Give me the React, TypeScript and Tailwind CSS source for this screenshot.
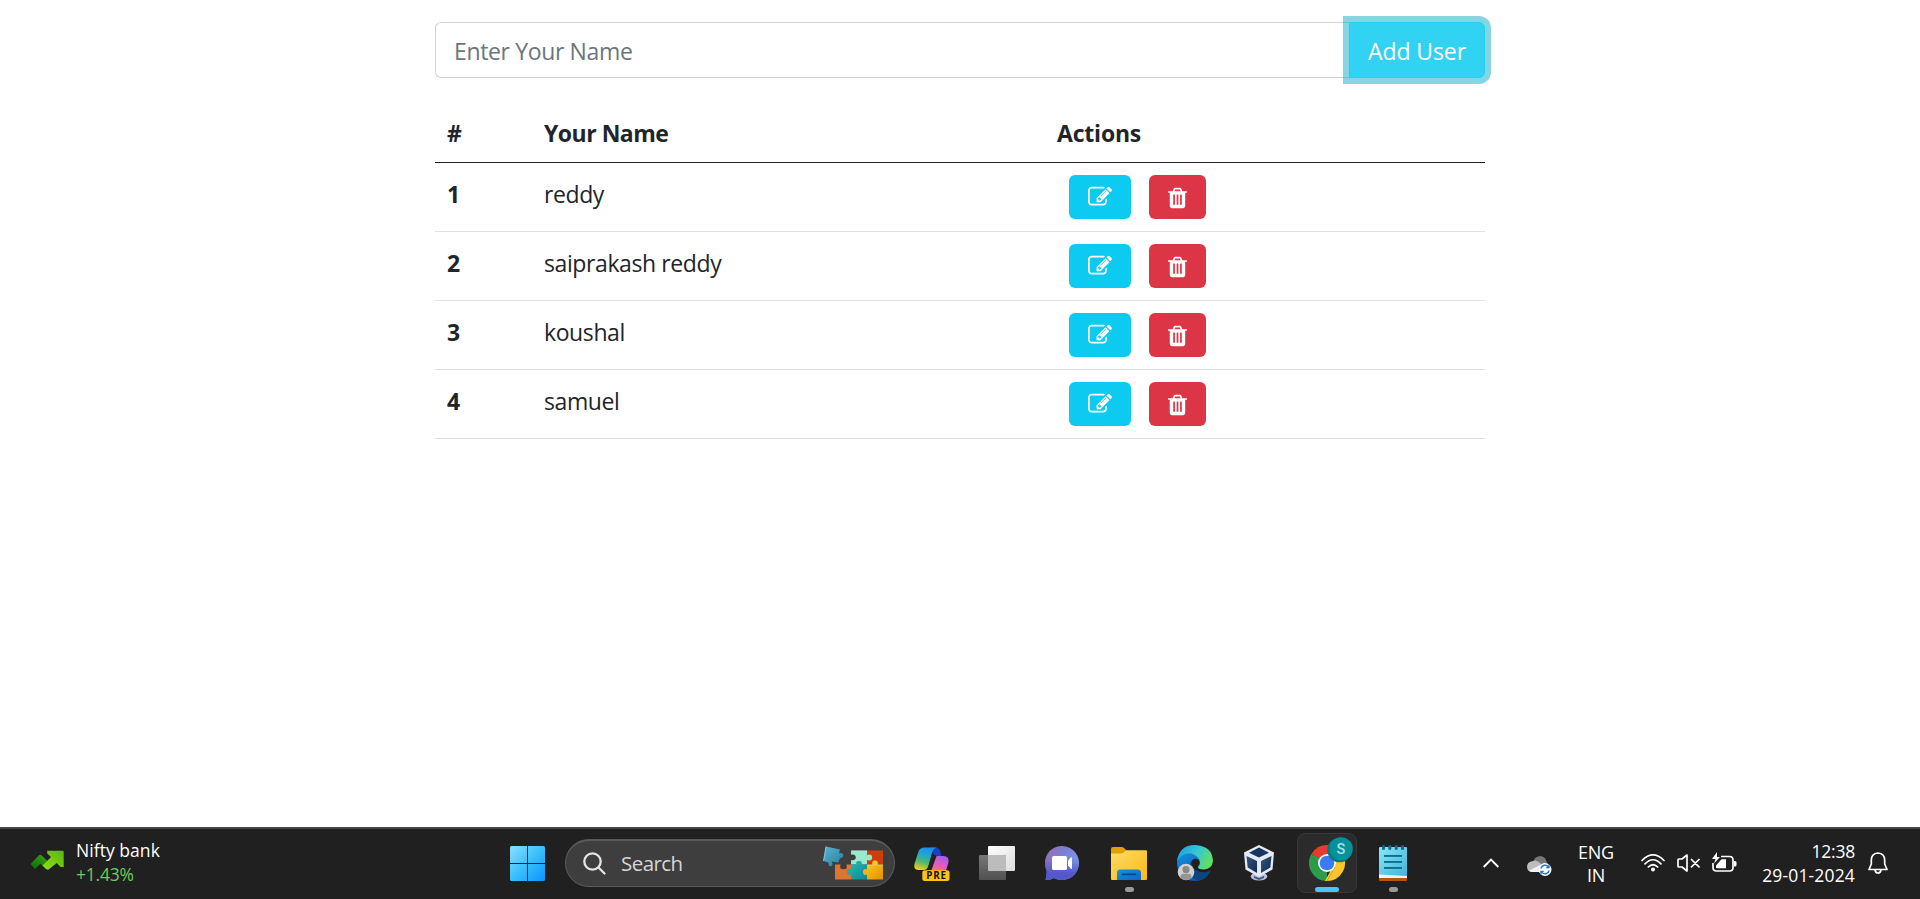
import React from "react";

const users = ["reddy", "saiprakash reddy", "koushal", "samuel"];

function EditIcon() {
  return (
    <svg viewBox="0 0 1792 1792" className="h-6 w-6 fill-white">
      <path d="M888 1184l116-116-152-152-116 116v56h96v96h56zm440-720q-16-16-33 1l-350 350q-17 17-1 33t33-1l350-350q17-17 1-33zm80 594v190q0 119-84.5 203.5t-203.5 84.5h-832q-119 0-203.5-84.5t-84.5-203.5v-832q0-119 84.5-203.5t203.5-84.5h832q63 0 117 25 15 7 18 23 3 17-9 29l-49 49q-14 14-32 8-23-6-45-6h-832q-66 0-113 47t-47 113v832q0 66 47 113t113 47h832q66 0 113-47t47-113v-126q0-13 9-22l64-64q15-15 35-7t20 29zm-96-738l288 288-672 672h-288v-288zm444 132l-92 92-288-288 92-92q28-28 68-28t68 28l152 152q28 28 28 68t-28 68z" />
    </svg>
  );
}

function TrashIcon() {
  return (
    <svg viewBox="192 0 1408 1792" className="mt-px h-6 w-[19px] fill-white">
      <path d="M704 1376v-704q0-14-9-23t-23-9h-64q-14 0-23 9t-9 23v704q0 14 9 23t23 9h64q14 0 23-9t9-23zm256 0v-704q0-14-9-23t-23-9h-64q-14 0-23 9t-9 23v704q0 14 9 23t23 9h64q14 0 23-9t9-23zm256 0v-704q0-14-9-23t-23-9h-64q-14 0-23 9t-9 23v704q0 14 9 23t23 9h64q14 0 23-9t9-23zm-544-992h448l-48-117q-7-9-17-11h-317q-10 2-17 11zm928 32v64q0 14-9 23t-23 9h-96v948q0 83-47 143.5t-113 60.5h-832q-66 0-113-58.5t-47-141.5v-952h-96q-14 0-23-9t-9-23v-64q0-14 9-23t23-9h309l70-167q15-37 54-63t79-26h320q40 0 79 26t54 63l70 167h309q14 0 23 9t9 23z" />
    </svg>
  );
}

function StocksIcon() {
  return (
    <svg viewBox="0 0 34 20" className="h-5 w-[34px]">
      <defs>
        <linearGradient id="st1" x1="0" x2="1" y1="1" y2="0">
          <stop offset="0" stopColor="#0b6a0b" />
          <stop offset="1" stopColor="#3fa912" />
        </linearGradient>
        <linearGradient id="st2" x1="0" x2="1" y1="1" y2="0">
          <stop offset="0" stopColor="#93dc1a" />
          <stop offset="1" stopColor="#57b80b" />
        </linearGradient>
      </defs>
      <path d="M0.5 14 9 5.300 Q10.300 4.300 11.600 5.300L21 14.500 16 19.300 10.300 13.800 5 19Z" fill="url(#st1)" />
      <path d="M12.500 15.500 21 7 17.200 3.500V.7H32.500Q33.700.7 33.700 2V17H30.500L26.800 13 18.600 19.600Q17.600 20 16.500 19.300Z" fill="url(#st2)" />
    </svg>
  );
}

function StartIcon() {
  return (
    <svg viewBox="0 0 35 35" className="h-[35px] w-[35px]">
      <defs>
        <linearGradient id="win" gradientUnits="userSpaceOnUse" x1="0" y1="0" x2="35" y2="35">
          <stop offset="0" stopColor="#8be0ff" />
          <stop offset=".45" stopColor="#3fc4fb" />
          <stop offset="1" stopColor="#0a93ff" />
        </linearGradient>
      </defs>
      <g fill="url(#win)">
        <path d="M1.500 0H17V17H0V1.500Q0 0 1.500 0Z" />
        <path d="M18 0H33.500Q35 0 35 1.500V17H18Z" />
        <path d="M0 18H17V35H1.500Q0 35 0 33.500Z" />
        <path d="M18 18H35V33.500Q35 35 33.500 35H18Z" />
      </g>
    </svg>
  );
}

function PuzzleIcon() {
  return (
    <svg viewBox="0 0 62 36" className="h-9 w-[62px]">
      <defs>
        <linearGradient id="pz1" x1="0" y1="0" x2="1" y2="1">
          <stop offset="0" stopColor="#58b4cb" />
          <stop offset="1" stopColor="#2a7da3" />
        </linearGradient>
        <linearGradient id="pz2" x1="0" y1="0" x2="1" y2="1">
          <stop offset="0" stopColor="#fbc51d" />
          <stop offset="1" stopColor="#e58e00" />
        </linearGradient>
        <linearGradient id="pz3" x1="0" y1="0" x2="1" y2="1">
          <stop offset="0" stopColor="#20b3b0" />
          <stop offset="1" stopColor="#11868f" />
        </linearGradient>
      </defs>
      <path d="M13 19.500h16V34.500H13z" fill="#dc7530" />
      <path d="M18.500 19H24.500V20.500Q26 24 21.500 24.200 17 24 18.500 20.500Z" fill="#3c3c3c" />
      <path d="M29 5.500h16v14H29z" fill="#97e8cc" />
      <path d="M28.500 9.800Q33.500 8.500 33.800 12.500 33.500 16 28.500 15Z" fill="#3d3d3d" />
      <path d="M45 5.500h16v14H45z" fill="#ce3e0d" />
      <path d="M29 19.500h16v15H29z" fill="url(#pz3)" />
      <path d="M45 19.500h16v15H45z" fill="url(#pz2)" />
      <path d="M45 10Q50 8.500 50.200 12.500 50 16.500 45 15Z" fill="#97e8cc" />
      <path d="M34.500 20Q33 16 37 16 41 16 39.500 20Z" fill="#20aaa9" />
      <path d="M50.500 20Q49 15.500 53 15.500 57 15.500 55.500 20Z" fill="#fbc51d" />
      <path d="M29.500 24.500Q25 23 25 27 25 31 29.500 29.500Z" fill="#20aaa9" />
      <path d="M45.500 24.500Q41 23 41 27 41 31 45.500 29.500Z" fill="#f4b316" />
      <path d="M4 1.500 18 4.500 17 8.500C21.500 6.500 23.600 13 17.800 13.500L16.500 17.500 9.500 16.500C13 21.500 6 23.800 6.500 17.500L1.500 16Z" fill="url(#pz1)" />
      <path d="M4 1.500 1.500 16" stroke="#9edbe8" strokeWidth=".8" />
      <path d="M29.500 6H45M45.500 20H60.500" stroke="#fff" strokeOpacity=".35" strokeWidth=".8" />
    </svg>
  );
}

function CopilotIcon() {
  return (
    <svg viewBox="0 0 36 36" className="h-9 w-9">
      <defs>
        <linearGradient id="cp1" x1=".6" x2=".3" y1="0" y2="1">
          <stop offset="0" stopColor="#1d8df0" />
          <stop offset=".35" stopColor="#1fa9cf" />
          <stop offset=".65" stopColor="#4fb96b" />
          <stop offset="1" stopColor="#f5cc1c" />
        </linearGradient>
        <linearGradient id="cp2" x1=".8" x2=".2" y1="0" y2="1">
          <stop offset="0" stopColor="#a45af0" />
          <stop offset=".5" stopColor="#e85bb6" />
          <stop offset="1" stopColor="#ff7a5c" />
        </linearGradient>
      </defs>
      <path d="M16 1.500H21.500Q25 1.500 26.200 5L27.500 10H24Q20.500 10 19 7Z" fill="#1741c6" />
      <path d="M10.500 1.500H23Q19.500 2 18 7L14.500 20Q13.300 24 9.500 24H4.500Q-1 24 .6 17.500L4.500 5.500Q6 1.500 10.500 1.500Z" fill="url(#cp1)" />
      <path d="M22.500 10H29.500Q35.800 10 34.300 17L31.500 26H8.500Q12.500 26 14.500 24H17.500Z" fill="url(#cp2)" />
      <path d="M22.500 10Q19.500 11 18 15.500L15.500 22.500 12.500 23.200Q14 22 14.700 19L17.500 10Z" fill="#242424" />
      <rect x="8.300" y="24.300" width="27.200" height="10.700" rx="2.500" fill="#ffc40c" />
      <text x="12.300" y="33.200" fontSize="9.800" fontWeight="700" fontFamily="Open Sans, sans-serif" letterSpacing=".8" fill="#111">PRE</text>
    </svg>
  );
}

function TaskViewIcon() {
  return (
    <svg viewBox="0 0 36 34" className="h-[34px] w-9">
      <defs>
        <linearGradient id="tv1" x1="0" y1="0" x2="1" y2="1">
          <stop offset="0" stopColor="#fff" />
          <stop offset="1" stopColor="#dcdcdc" />
        </linearGradient>
        <linearGradient id="tv2" x1="0" y1="0" x2="0" y2="1">
          <stop offset="0" stopColor="#777" />
          <stop offset="1" stopColor="#505050" />
        </linearGradient>
      </defs>
      <rect x="9" y="0" width="27" height="25" rx="1" fill="url(#tv1)" />
      <rect x="0" y="9" width="27" height="25" rx="1" fill="url(#tv2)" />
      <path d="M9 9H26Q27 9 27 10V25H10Q9 25 9 24Z" fill="#bcbcbc" />
    </svg>
  );
}

function ChatIcon() {
  return (
    <svg viewBox="0 0 34 34" className="h-[34px] w-[34px]">
      <defs>
        <linearGradient id="ch" x1="0" y1="0" x2="1" y2=".6">
          <stop offset="0" stopColor="#9a6cb0" />
          <stop offset=".5" stopColor="#7a7fd6" />
          <stop offset="1" stopColor="#7ea0ea" />
        </linearGradient>
        <linearGradient id="ch2" x1="0" y1="0" x2="0" y2="1">
          <stop offset=".35" stopColor="#5558c8" stopOpacity="0" />
          <stop offset=".8" stopColor="#5558c8" />
        </linearGradient>
      </defs>
      <path d="M17 0A17 17 0 1 1 9 32Q5 34.500 .5 34 2 29 1.600 24.500A17 17 0 0 1 17 0Z" fill="url(#ch)" />
      <path d="M17 0A17 17 0 1 1 9 32Q5 34.500 .5 34 2 29 1.600 24.500A17 17 0 0 1 17 0Z" fill="url(#ch2)" />
      <rect x="7" y="10" width="15" height="14" rx="1.500" fill="#fff" />
      <path d="M23 14.500 26 11.500Q27 11 27 12V22.500Q27 23.500 26 22.800L23 19.500Z" fill="#fff" />
    </svg>
  );
}

function FolderIcon() {
  return (
    <svg viewBox="0 0 36 33" className="h-[33px] w-9">
      <defs>
        <linearGradient id="fd" x1="0" y1="0" x2="1" y2="1">
          <stop offset="0" stopColor="#ffdc6b" />
          <stop offset="1" stopColor="#f9b910" />
        </linearGradient>
        <linearGradient id="fd2" x1="0" y1="0" x2="1" y2="1">
          <stop offset="0" stopColor="#1496e0" />
          <stop offset="1" stopColor="#0d66c2" />
        </linearGradient>
      </defs>
      <path d="M0 2Q0 0 2 0H10.500Q12 0 13 1L16 4 11 9H0Z" fill="#e0a000" />
      <path d="M0 6.500H10Q11.500 6.500 12.500 5.500L14 4Q15 3.300 16 3.300H35Q36 3.300 36 4.500V32Q36 33 35 33H1Q0 33 0 32Z" fill="url(#fd)" />
      <path d="M6 33V26Q6 22.500 9.500 22.500H26.500Q30 22.500 30 26V33Z" fill="url(#fd2)" />
      <rect x="10.500" y="26.500" width="15" height="1.800" rx=".9" fill="#07468a" />
    </svg>
  );
}

function EdgeIcon() {
  return (
    <svg viewBox="0 0 36 36" className="h-9 w-9">
      <defs>
        <linearGradient id="ed1" x1="0" y1=".2" x2="1" y2=".6">
          <stop offset="0" stopColor="#1fa0e0" />
          <stop offset=".5" stopColor="#35c6d6" />
          <stop offset="1" stopColor="#66e05a" />
        </linearGradient>
        <linearGradient id="ed2" x1="0" y1="0" x2=".6" y2="1">
          <stop offset="0" stopColor="#1490e0" />
          <stop offset="1" stopColor="#0b58b0" />
        </linearGradient>
      </defs>
      <path d="M0 17Q1 7 11 8 22 9 22 17C20 24 25 28.500 33.300 26Q28 36 18 36 0 35 0 17Z" fill="url(#ed2)" />
      <path d="M13.500 17Q9 29 20 35.800 29 35 33.500 26.500 32 25.500 27 27 17 27 14.500 20 13.500 18 13.500 17Z" fill="#0d4584" />
      <path d="M14.500 20Q13 15.500 17.500 13.800 22 13.500 22.300 17.500 22 19.500 21 21 20.500 23 23 24.300 26 27 33 24.500 31.500 27.500 27 27.300 17.500 27.500 14.500 20Z" fill="#202020" />
      <path d="M0 16.500Q2 0 18 0 35.500 1 36 16 35 24 27 24.500 21 24.500 21 22 24 19 22 14.500 18.500 8.500 11 8.600 3.500 9 0 16.500Z" fill="url(#ed1)" />
      <circle cx="9" cy="27" r="8.300" fill="#d2d0ce" />
      <circle cx="9" cy="24.600" r="3.600" fill="#8a8886" />
      <path d="M3.500 33Q3.500 28.800 6 28.800H12Q14.500 28.800 14.500 33 9 37 3.500 33Z" fill="#979593" />
    </svg>
  );
}

function VirtualBoxIcon() {
  return (
    <svg viewBox="0 0 30 36" className="h-9 w-[30px]">
      <defs>
        <linearGradient id="vb" x1="0" y1="0" x2="1" y2="1">
          <stop offset="0" stopColor="#35547f" />
          <stop offset="1" stopColor="#0f2a50" />
        </linearGradient>
      </defs>
      <path d="M8 29 15 26 22 29 23.500 31.500Q22 35.500 15 35.500T6.500 31.500Z" fill="#b9c2d8" />
      <path d="M10 31 15 33 20 31V33L15 35 10 33Z" fill="#405784" />
      <path d="M15 0 30 7.500 28.500 24.500 15 32 1.500 24.500 0 7.500Z" fill="#e3e9f5" />
      <path d="M15 2.500 25 7.700 15 12.500 5 7.700Z" fill="#17365f" />
      <path d="M2.500 11 13 16V28L3.700 22.500Z" fill="url(#vb)" />
      <path d="M27.500 11 17 16V28L26.300 22.500Z" fill="url(#vb)" />
    </svg>
  );
}

function ChromeIcon() {
  return (
    <svg viewBox="0 0 44 44" className="h-11 w-11">
      <path d="M18 26 2.400 17A18 18 0 0 1 33.600 17Z" fill="#e63b2e" />
      <path d="M18 26V44A18 18 0 0 1 2.400 17L10.500 30Z" fill="#2d9c4a" />
      <path d="M18 17H33.600A18 18 0 0 1 18 44L25.800 30.500Z" fill="#fcc62a" />
      <path d="M2.400 17 10.200 30.500 18 26 10 21Z" fill="#2d9c4a" />
      <path d="M25.800 30.500 18 44 16 43.900 23 31Z" fill="#fcc62a" />
      <circle cx="18" cy="26" r="9" fill="#fff" />
      <circle cx="18" cy="26" r="7.300" fill="#3a7cf0" />
      <circle cx="30.500" cy="13" r="12.300" fill="#087981" />
      <circle cx="32.200" cy="11.800" r="11.600" fill="#05919b" />
      <text x="32" y="16.500" textAnchor="middle" fontSize="14.500" fontWeight="500" fontFamily="Roboto, sans-serif" fill="#a5e3e4">S</text>
    </svg>
  );
}

function NotepadIcon() {
  return (
    <svg viewBox="0 0 28 36" className="h-9 w-7">
      <defs>
        <linearGradient id="np" x1="0" y1="0" x2="1" y2="1">
          <stop offset="0" stopColor="#8be6f5" />
          <stop offset="1" stopColor="#3fb4da" />
        </linearGradient>
      </defs>
      <path d="M0 31H28V35Q28 36 27 36H1Q0 36 0 35Z" fill="#b4560f" />
      <path d="M0 29H28V33H0Z" fill="#f2f2f2" />
      <path d="M0 3Q0 2 1 2H27Q28 2 28 3V31L0 29.500Z" fill="url(#np)" />
      <g fill="#0b6f93">
        <rect x="3" y="0" width="3" height="5" rx="1.500" />
        <rect x="9.300" y="0" width="3" height="5" rx="1.500" />
        <rect x="15.700" y="0" width="3" height="5" rx="1.500" />
        <rect x="22" y="0" width="3" height="5" rx="1.500" />
        <rect x="5" y="10" width="18" height="1.900" />
        <rect x="5" y="16" width="18" height="1.900" />
        <rect x="5" y="22" width="18" height="1.900" />
      </g>
    </svg>
  );
}

function CloudSyncIcon() {
  return (
    <svg viewBox="0 0 25 21" className="h-[21px] w-[25px]">
      <path d="M6 7Q8 1 13.500 1 19 2 20 8L14 12Z" fill="#777" />
      <path d="M5.500 6.200Q9 4 13 8L19 13 12 17H5Q0 16.500 0 11.500 .5 6.500 5.500 6.200Z" fill="#bcbcbc" />
      <path d="M2 15.500 13 10 18 11V17H5Q3 17 2 15.500Z" fill="#f2f2f2" />
      <circle cx="18" cy="14.500" r="6.500" fill="#fff" />
      <g fill="none" stroke="#1673c8" strokeWidth="1.300">
        <path d="M13.800 13.500A4.300 4.300 0 0 1 21.500 12M22.200 15.500A4.300 4.300 0 0 1 14.500 17" />
        <path d="M22 9.800V12.500H19.300M14 19.200V16.500H16.700" />
      </g>
    </svg>
  );
}

function WifiIcon() {
  return (
    <svg viewBox="0 0 24 18" className="h-[18px] w-6" fill="none" stroke="#fff" strokeWidth="1.700" strokeLinecap="round">
      <path d="M1 6.500Q12-4.700 23 6.500M4 9.800Q12 1.700 20 9.800M7.300 13Q12 8.500 16.700 13" />
      <circle cx="12" cy="15.500" r="2" fill="#fff" stroke="none" />
    </svg>
  );
}

function MuteIcon() {
  return (
    <svg viewBox="0 0 23 18" className="h-[18px] w-[23px]" fill="none" stroke="#fff" strokeWidth="1.700" strokeLinejoin="round" strokeLinecap="round">
      <path d="M1 6V12Q1 13 2 13H5L10 17V1L5 5H2Q1 5 1 6ZM14.500 5.500 22 12.800M22 5.500 14.500 12.800" />
    </svg>
  );
}

function BatteryIcon() {
  return (
    <svg viewBox="0 0 25 20" className="h-5 w-[25px]">
      <path d="M9 4.500H17.500Q21 4.500 21 8V15.500Q21 19 17.500 19H4.500Q1 19 1 15.500V11" fill="none" stroke="#fff" strokeWidth="1.700" />
      <path d="M22 9H23Q24.500 9 24.500 10.500V13Q24.500 14.500 23 14.500H22Z" fill="#fff" />
      <path d="M9.500 7.300H14V16.300H5Q4 16.300 4 15.500V13.500Z" fill="#fff" />
      <path d="M5 0 0 7H3.500L2 11.500 8 5H5Z" fill="#fff" />
    </svg>
  );
}

function BellIcon() {
  return (
    <svg viewBox="0 0 20 22" className="h-[22px] w-5" fill="none" stroke="#fff" strokeWidth="1.700" strokeLinejoin="round">
      <path d="M10 1Q3.500 1.500 3.300 8V12L1 17.500H19L16.700 12V8Q16.500 1.500 10 1ZM7 18Q7.500 21 10 21 12.500 21 13 18" />
    </svg>
  );
}

function Cell({ className, children, mark }: { className: string; children: React.ReactNode; mark?: React.ReactNode }) {
  return (
    <div className={`flex flex-col items-center ${className}`}>
      <div className="flex h-[60px] items-center justify-center">{children}</div>
      <div className="-mt-1.5 flex h-[5px] justify-center">{mark}</div>
    </div>
  );
}

const dot = <span className="h-[5px] w-[9px] rounded-full bg-[#999]" />;

export default function App() {
  return (
    <div className="flex h-[899px] w-full flex-col overflow-hidden bg-white font-['Open_Sans',sans-serif] text-[#212529]">
      <main className="mx-auto w-[1050px] grow pt-[22px] text-[23px] leading-9 tracking-[-0.4px]">
        <div className="flex h-14">
          <input
            placeholder="Enter Your Name"
            className="min-w-0 grow rounded-l-[6px] border border-r-0 border-[#ced4da] px-[18px] pt-[2px] tracking-[-0.36px] outline-none placeholder:text-[#6c757d]"
          />
          <button className="relative w-[136px] rounded-r-[6px] border border-[#25cff2] bg-[#31d2f2] pt-[2px] tracking-[-0.1px] text-white shadow-[0_0_0_6px_rgba(11,172,204,0.5)]">
            Add User
          </button>
        </div>

        <div className="mt-6">
          <div className="grid h-[61px] grid-cols-[97px_513px_1fr] border-b border-[#212529] pt-[13px] font-bold tracking-[-0.5px]">
            <div className="pl-3">#</div>
            <div className="pl-3">Your Name</div>
            <div className="pl-3 tracking-[-0.2px]">Actions</div>
          </div>
          {users.map((name, i) => (
            <div key={name} className="grid h-[69px] grid-cols-[97px_513px_1fr] border-b border-[#dee2e6] pt-3">
              <div className="pl-3 pt-px font-bold">{i + 1}</div>
              <div className="pl-3 pt-px">{name}</div>
              <div className="flex gap-[18px] pl-6">
                <button className="flex h-11 w-[62px] items-center justify-center rounded-[6px] bg-[#0dcaf0]">
                  <EditIcon />
                </button>
                <button className="flex h-11 w-[57px] items-center justify-center rounded-[6px] bg-[#dc3545]">
                  <TrashIcon />
                </button>
              </div>
            </div>
          ))}
        </div>
      </main>

      <footer className="flex h-[72px] shrink-0 border-t-2 border-[#454545] bg-[#202020] text-white">
        <div className="flex w-[509px] pl-[30px] pt-[9px]">
          <div className="pt-3"><StocksIcon /></div>
          <div className="ml-3 text-[17.500px] leading-6 tracking-[0.05px]">
            <div>Nifty bank</div>
            <div className="tracking-[-0.2px] text-[#6ccb5f]">+1.43%</div>
          </div>
        </div>

        <div className="flex h-[70px]">
          <div className="flex h-[70px] w-[56px] items-center pb-px pl-px"><StartIcon /></div>
          <div className="mt-[10px] flex h-12 w-[330px] items-center rounded-full border border-t-2 border-[#5a5a5a] bg-[#3e3e3e] pr-[10px] pl-[17px]">
            <svg viewBox="0 0 23 23" className="h-[23px] w-[23px]" fill="none" stroke="#e4e4e4" strokeWidth="2.300" strokeLinecap="round">
              <circle cx="9.500" cy="9.500" r="8.200" />
              <path d="m15.500 15.500 6 6" />
            </svg>
            <span className="ml-[15px] grow text-[20.500px] tracking-[-0.55px] text-[#d6d6d6]">Search</span>
            <div className="pb-0.5"><PuzzleIcon /></div>
          </div>
          <Cell className="w-[73px] pt-[5px]"><CopilotIcon /></Cell>
          <Cell className="w-[58px] pt-[4px]"><TaskViewIcon /></Cell>
          <Cell className="w-[72px] pt-[4px]"><ChatIcon /></Cell>
          <Cell className="w-[62px] pt-[4px]" mark={dot}><FolderIcon /></Cell>
          <Cell className="w-[70px] pt-[4px]"><EdgeIcon /></Cell>
          <Cell className="w-[58px] pt-[4px]"><VirtualBoxIcon /></Cell>
          <div className="ml-[9px] mt-1 flex h-[60px] w-[60px] flex-col items-center rounded-lg border border-[#383838] bg-[#2b2b2b]">
            <div className="ml-[7px] mt-[3px] h-11"><ChromeIcon /></div>
            <span className="mt-[6px] h-[5px] w-6 rounded-full bg-[#4cc2ff]" />
          </div>
          <Cell className="ml-[3px] w-[66px] pt-[4px]" mark={dot}><NotepadIcon /></Cell>
        </div>

        <div className="ml-auto flex h-[70px] items-center pr-[32px]">
          <svg viewBox="0 0 16 10" className="mb-0.5 h-[10px] w-4" fill="none" stroke="#fff" strokeWidth="1.900">
            <path d="m.7 9 7.300-7.500L15.300 9" />
          </svg>
          <div className="ml-7 pt-0.5"><CloudSyncIcon /></div>
          <div className="ml-[25px] w-[38px] text-center text-[18px] leading-[23px] tracking-[-0.2px]">
            <div>ENG</div>
            <div>IN</div>
          </div>
          <div className="ml-[26px] mb-0.5"><WifiIcon /></div>
          <div className="ml-3 mb-0.5"><MuteIcon /></div>
          <div className="ml-3 mb-[5px]"><BatteryIcon /></div>
          <div className="ml-6 w-[94px] whitespace-nowrap pb-0.5 text-right text-[17.500px] leading-6 tracking-[0.15px]">
            <div className="tracking-[-0.2px]">12:38</div>
            <div>29-01-2024</div>
          </div>
          <div className="ml-[13px] mb-0.5"><BellIcon /></div>
        </div>
      </footer>
    </div>
  );
}
